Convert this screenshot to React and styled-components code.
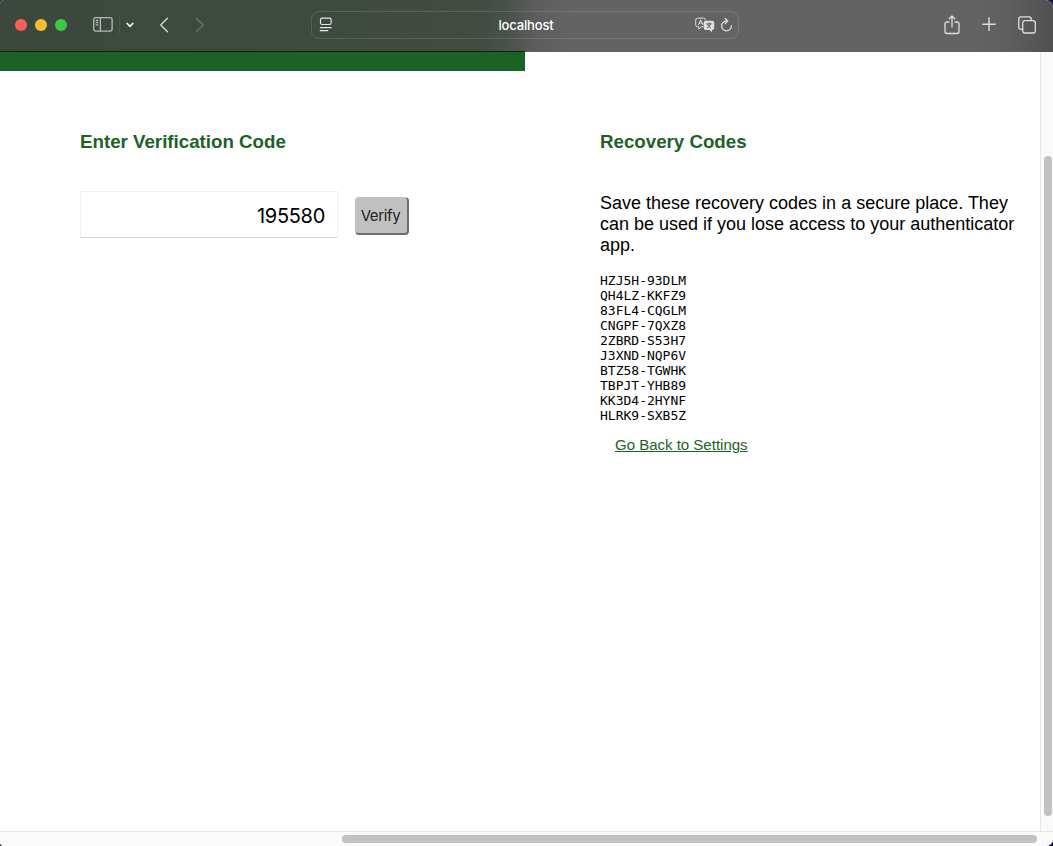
import React from 'react';
import styled, { createGlobalStyle } from 'styled-components';

const Global = createGlobalStyle`
  * { box-sizing: border-box; }
  html, body { margin: 0; overflow: hidden; background: #160f55; }
`;

const Window = styled.div`
  width: 1053px;
  height: 846px;
  display: flex;
  flex-direction: column;
  overflow: hidden;
  border-radius: 4px 8px 7px 4px;
  background: #fff;
  font-family: "Liberation Sans", Helvetica, Arial, sans-serif;
`;

const Toolbar = styled.header`
  flex: none;
  height: 52px;
  display: flex;
  align-items: center;
  padding: 0 17px 2px 15px;
  color: #dcdfdc;
  border-bottom: 1px solid transparent;
  background:
    linear-gradient(90deg, #0d2411 0 525px, #626262 525px 1020px, #505050) 0 100% / 100% 1px no-repeat border-box,
    linear-gradient(90deg, #3c483d 0, #3e493f 300px, #424c43 480px, #4b514b 510px, #5c5d5c 535px, #636363 570px, #636363 970px, #5e5e5e 1010px, #505050 1053px) border-box;
  svg { display: block; flex: none; }
`;

const Lights = styled.div`
  display: flex;
  gap: 8px;
  width: 78px;
`;

const Light = styled.span`
  width: 12px;
  height: 12px;
  border-radius: 50%;
  background: ${(p) => p.$color};
`;

const Divider = styled.span`
  width: 1px;
  height: 18px;
  margin: 0 6px 0 6px;
  background: #4b554c;
`;

const Navigation = styled.div`
  display: flex;
  align-items: center;
  gap: 24px;
  margin-left: 24px;
  width: 153px;
`;

const Address = styled.div`
  width: 428px;
  height: 28px;
  display: grid;
  grid-template-columns: 60px 1fr 60px;
  align-items: center;
  padding: 0 5px 0 7px;
  border: 1px solid rgba(255, 255, 255, 0.13);
  border-radius: 8px;
`;

const Host = styled.span`
  text-align: center;
  color: #fff;
  font: 500 13px/16px Inter, sans-serif;
  letter-spacing: -0.15px;
`;

const AddressActions = styled.div`
  display: flex;
  justify-content: flex-end;
  align-items: center;
  gap: 5px;
`;

const Actions = styled.div`
  display: flex;
  align-items: center;
  gap: 22px;
  margin-left: auto;
`;

const Viewport = styled.div`
  flex: 1;
  display: grid;
  grid-template: 779px 15px / 1040px 13px;
`;

const Page = styled.main`
  background: #fff;
`;

const GreenBand = styled.div`
  width: 525px;
  height: 19px;
  background: #1b6324;
`;

const Columns = styled.div`
  display: grid;
  grid-template-columns: 520px 425px;
  padding: 60px 0 0 80px;
`;

const Heading = styled.h3`
  margin: 0;
  color: #1b6324;
  font-size: 18.72px;
  line-height: 22px;
`;

const CodeForm = styled.form`
  display: flex;
  align-items: center;
  gap: 17px;
  margin-top: 38px;
`;

const CodeInput = styled.input`
  width: 258px;
  height: 47px;
  padding: 2px 12px 0;
  border: 1px solid #f1f1f1;
  border-bottom: 1px solid #d5d5d5;
  outline: none;
  border-radius: 0;
  color: #000;
  background: #fff;
  text-align: right;
  font: 20px Inter, sans-serif;
  letter-spacing: -0.3px;
`;

const VerifyButton = styled.button`
  width: 54px;
  height: 38px;
  margin-top: 2px;
  padding: 0 2px 0 0;
  border: solid;
  border-width: 1px 2px 2px 1px;
  border-color: #c0c0c0 #6c6c6c #6c6c6c #c0c0c0;
  border-radius: 4px;
  background: #c0c0c0;
  color: #222;
  font: 15px Inter, sans-serif;
  letter-spacing: -0.35px;
`;

const Description = styled.p`
  margin: 40px 0 17px;
  color: #000;
  font-size: 18px;
  line-height: 21px;
`;

const Codes = styled.pre`
  margin: 0;
  color: #000;
  font: 13px/15px "DejaVu Sans Mono", monospace;
`;

const SettingsLink = styled.a`
  display: inline-block;
  margin: 13px 0 0 15px;
  color: #1b6324;
  font-size: 15px;
  line-height: 18px;
  text-decoration: underline;
`;

const VerticalTrack = styled.div`
  border-left: 1px solid #e6e6e6;
  background: #fafafa;
  padding: 104px 0 0 3px;
`;

const HorizontalTrack = styled.div`
  grid-column: 1 / 3;
  border-top: 1px solid #e6e6e6;
  background: #fafafa;
  padding: 3px 0 0 342px;
`;

const Thumb = styled.div`
  width: ${(p) => p.$width}px;
  height: ${(p) => p.$height}px;
  border-radius: 4px;
  background: #c1c1c1;
`;

const recoveryCodes = [
  'HZJ5H-93DLM', 'QH4LZ-KKFZ9', '83FL4-CQGLM', 'CNGPF-7QXZ8', '2ZBRD-S53H7',
  'J3XND-NQP6V', 'BTZ58-TGWHK', 'TBPJT-YHB89', 'KK3D4-2HYNF', 'HLRK9-SXB5Z',
];

const Icon = ({ w, h, children, sw = 1.3, color = 'currentColor' }) => (
  <svg width={w} height={h} viewBox={`0 0 ${w} ${h}`} fill="none" stroke={color} strokeWidth={sw} strokeLinecap="round" strokeLinejoin="round">
    {children}
  </svg>
);

const SidebarIcon = () => (
  <Icon w={20} h={15} sw={1.3} color="#b4bcb5">
    <rect x="0.7" y="0.7" width="18.4" height="13.4" rx="2" />
    <path d="M7.4 .7v13.4" />
    <path d="M3.2 3.5h1.6M3.2 5.7h1.6M3.2 7.9h1.6" />
  </Icon>
);

const ReaderIcon = () => (
  <Icon w={13} h={15} sw={1.2} color="#e0e5e0">
    <rect x="1.5" y="1.2" width="10.6" height="6.3" rx="1.5" />
    <path d="M1.3 10.6h11M1.3 13.7h7.4" />
  </Icon>
);

const TranslateIcon = () => (
  <Icon w={20} h={16} sw={1} color="#dedede">
    <path d="M8 9.8H6.3L3.8 12V9.8H2.7Q.7 9.8.7 7.8V3.1Q.7 1.1 2.7 1.1H8.5Q10.5 1.1 10.5 3.1" />
    <path d="M3.7 7.5 5.7 2.8 7.7 7.5M4.4 6h2.6" />
    <path d="M10.7 3.7h6.5q2 0 2 2v5.4q0 2-2 2H17v2.2l-2.6-2.2h-3.7q-2 0-2-2V5.7q0-2 2-2z" fill="#dedede" stroke="none" />
    <path d="M11.7 6.9h4.7M14 5.9v1M12.2 11q2.5-1.3 3.2-4.1M12.7 7.8q.7 2 3 3.2" stroke="#555" strokeWidth=".9" />
  </Icon>
);

const ReloadIcon = () => (
  <Icon w={13} h={15} sw={1.3}>
    <path d="M7.2 4H6.5A4.9 4.9 0 1 0 11.4 8.9" />
    <path d="M5.1 1.4 7.8 4 5.1 6.6" />
  </Icon>
);

const ShareIcon = () => (
  <Icon w={16} h={20} sw={1.3}>
    <path d="M5 7H3Q1 7 1 9v7.5q0 2 2 2h10q2 0 2-2V9q0-2-2-2h-2M8 12V1M5.2 3.8 8 1l2.8 2.8" />
  </Icon>
);

const PlusIcon = () => <Icon w={14} h={16} sw={1.4}><path d="M7 1v12.4M.8 7.2h12.4" /></Icon>;

const TabsIcon = () => (
  <Icon w={18} h={18} sw={1.3}>
    <path d="M4.7 13.2H3Q.8 13.2.8 11V3Q.8.8 3 .8h8q2.2 0 2.2 2.2v1.4" />
    <rect x="4.7" y="4.6" width="12.6" height="12.4" rx="2.2" />
  </Icon>
);

export default function App() {
  return (
    <>
      <Global />
      <Window>
        <Toolbar>
          <Lights>
            <Light $color="#fa5f57" />
            <Light $color="#fcbc2f" />
            <Light $color="#3cc840" />
          </Lights>
          <SidebarIcon />
          <Divider />
          <Icon w={8} h={6} sw={1.7} color="#f1f4f1"><path d="M1.2 1.5 4 4.3 6.8 1.5" /></Icon>
          <Navigation>
            <Icon w={12} h={16} sw={1.5} color="#cbd1cb"><path d="M9.5 1.2 2.7 8l6.8 6.8" /></Icon>
            <Icon w={12} h={16} sw={1.5} color="#657067"><path d="M2.5 1.2 9.3 8 2.5 14.8" /></Icon>
          </Navigation>
          <Address>
            <ReaderIcon />
            <Host>localhost</Host>
            <AddressActions>
              <TranslateIcon />
              <ReloadIcon />
            </AddressActions>
          </Address>
          <Actions>
            <ShareIcon />
            <PlusIcon />
            <TabsIcon />
          </Actions>
        </Toolbar>
        <Viewport>
          <Page>
            <GreenBand />
            <Columns>
              <section>
                <Heading>Enter Verification Code</Heading>
                <CodeForm>
                  <CodeInput defaultValue="195580" aria-label="Verification code" />
                  <VerifyButton type="button">Verify</VerifyButton>
                </CodeForm>
              </section>
              <section>
                <Heading>Recovery Codes</Heading>
                <Description>
                  Save these recovery codes in a secure place. They can be used if you lose access to your authenticator app.
                </Description>
                <Codes>{recoveryCodes.join('\n')}</Codes>
                <SettingsLink href="#">Go Back to Settings</SettingsLink>
              </section>
            </Columns>
          </Page>
          <VerticalTrack><Thumb $width={8} $height={660} /></VerticalTrack>
          <HorizontalTrack><Thumb $width={695} $height={8} /></HorizontalTrack>
        </Viewport>
      </Window>
    </>
  );
}
